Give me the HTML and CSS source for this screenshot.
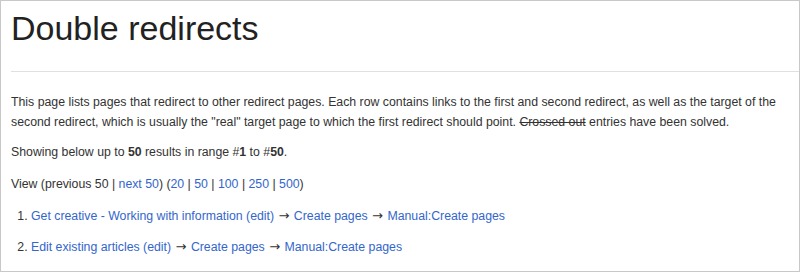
FILE: index.html
```html
<!DOCTYPE html>
<html lang="en">
<head>
  <meta charset="UTF-8">
  <title>Double redirects</title>
  <link rel="stylesheet" href="styles.css">
</head>
<body>
  <div class="page">
    <h1 class="title">Double redirects</h1>
    <div class="content">
      <p class="intro">This page lists pages that redirect to other redirect pages. Each row contains links to the first and second redirect, as well as the target of the second redirect, which is usually the "real" target page to which the first redirect should point. <del>Crossed out</del> entries have been solved.</p>
      <p>Showing below up to <b>50</b> results in range #<b>1</b> to #<b>50</b>.</p>
      <p>View (previous 50 | <a href="#">next 50</a>) (<a href="#">20</a> | <a href="#">50</a> | <a href="#">100</a> | <a href="#">250</a> | <a href="#">500</a>)</p>
      <ol class="results">
        <li><a href="#">Get creative - Working with information</a> <a href="#">(edit)</a> <span class="arrow">→</span> <a href="#">Create pages</a> <span class="arrow">→</span> <a href="#">Manual:Create pages</a></li>
        <li><a href="#">Edit existing articles</a> <a href="#">(edit)</a> <span class="arrow">→</span> <a href="#">Create pages</a> <span class="arrow">→</span> <a href="#">Manual:Create pages</a></li>
      </ol>
    </div>
  </div>
</body>
</html>
```

FILE: styles.css
```css
* {
  margin: 0;
  padding: 0;
  box-sizing: border-box;
}
body {
  font-family: "Liberation Sans", Arial, sans-serif;
  color: #333;
  background: #fff;
}
.page {
  width: 800px;
  height: 272px;
  border: 1px solid #c8c8c8;
  padding-top: 7px;
}
.title {
  font-size: 34px;
  font-weight: normal;
  line-height: 41px;
  color: #222;
  margin-left: 10px;
  padding-bottom: 22px;
  border-bottom: 1px solid #e0e0e0;
}
.content {
  padding: 20px 10px 0 10px;
  font-size: 12.3px;
  line-height: 20px;
}
.content p {
  margin-bottom: 12px;
}
.content .intro {
  margin-bottom: 10px;
}
a {
  color: #3366cc;
  text-decoration: none;
}
del {
  color: #333;
}
.results {
  padding-left: 20px;
}
.results li {
  margin-bottom: 11px;
}
.arrow {
  font-family: "DejaVu Sans", sans-serif;
  font-size: 13px;
  padding: 0 1px;
}
```
